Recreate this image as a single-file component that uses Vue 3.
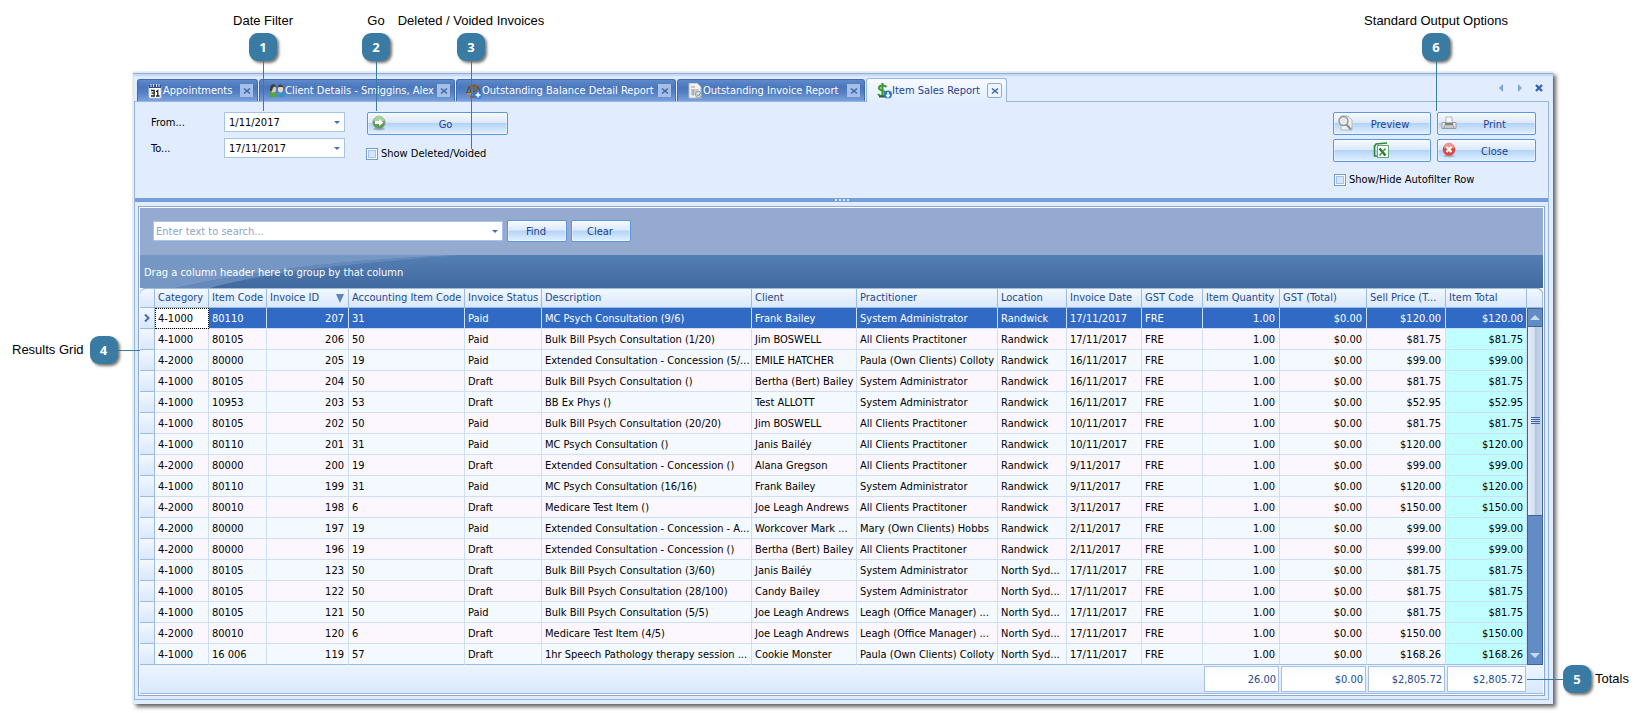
<script setup>
import { ref } from 'vue'

const tabs = [
  { id: 'appointments', title: 'Appointments' },
  { id: 'client', title: 'Client Details - Smiggins, Alex' },
  { id: 'balance', title: 'Outstanding Balance Detail Report' },
  { id: 'invoice', title: 'Outstanding Invoice Report' },
  { id: 'sales', title: 'Item Sales Report', active: true },
]

const fromDate = ref('1/11/2017')
const toDate = ref('17/11/2017')
const search = ref('')
const showVoided = ref(false)
const showAutofilter = ref(false)

const columns = [
  { key: 'category', title: 'Category' },
  { key: 'code', title: 'Item Code' },
  { key: 'invoice', title: 'Invoice ID', num: true, sorted: true },
  { key: 'account', title: 'Accounting Item Code' },
  { key: 'status', title: 'Invoice Status' },
  { key: 'description', title: 'Description' },
  { key: 'client', title: 'Client' },
  { key: 'practitioner', title: 'Practitioner' },
  { key: 'location', title: 'Location' },
  { key: 'date', title: 'Invoice Date' },
  { key: 'gstcode', title: 'GST Code' },
  { key: 'quantity', title: 'Item Quantity', num: true },
  { key: 'gst', title: 'GST (Total)', num: true },
  { key: 'price', title: 'Sell Price (T...', num: true },
  { key: 'total', title: 'Item Total', num: true },
]

const SA = 'System Administrator'
const ACP = 'All Clients Practitoner'
const rows = [
  ['4-1000', '80110', '207', '31', 'Paid', 'MC Psych Consultation (9/6)', 'Frank Bailey', SA, 'Randwick', '17/11/2017', '$120.00'],
  ['4-1000', '80105', '206', '50', 'Paid', 'Bulk Bill Psych Consultation (1/20)', 'Jim BOSWELL', ACP, 'Randwick', '17/11/2017', '$81.75'],
  ['4-2000', '80000', '205', '19', 'Paid', 'Extended Consultation - Concession (5/...', 'EMILE HATCHER', 'Paula (Own Clients) Colloty', 'Randwick', '16/11/2017', '$99.00'],
  ['4-1000', '80105', '204', '50', 'Draft', 'Bulk Bill Psych Consultation ()', 'Bertha (Bert) Bailey', SA, 'Randwick', '16/11/2017', '$81.75'],
  ['4-1000', '10953', '203', '53', 'Draft', 'BB Ex Phys ()', 'Test ALLOTT', SA, 'Randwick', '16/11/2017', '$52.95'],
  ['4-1000', '80105', '202', '50', 'Paid', 'Bulk Bill Psych Consultation (20/20)', 'Jim BOSWELL', ACP, 'Randwick', '10/11/2017', '$81.75'],
  ['4-1000', '80110', '201', '31', 'Paid', 'MC Psych Consultation ()', 'Janis Bailéy', ACP, 'Randwick', '10/11/2017', '$120.00'],
  ['4-2000', '80000', '200', '19', 'Draft', 'Extended Consultation - Concession ()', 'Alana Gregson', ACP, 'Randwick', '9/11/2017', '$99.00'],
  ['4-1000', '80110', '199', '31', 'Paid', 'MC Psych Consultation (16/16)', 'Frank Bailey', SA, 'Randwick', '9/11/2017', '$120.00'],
  ['4-2000', '80010', '198', '6', 'Draft', 'Medicare Test Item ()', 'Joe Leagh Andrews', ACP, 'Randwick', '3/11/2017', '$150.00'],
  ['4-2000', '80000', '197', '19', 'Paid', 'Extended Consultation - Concession - A...', 'Workcover Mark ...', 'Mary (Own Clients) Hobbs', 'Randwick', '2/11/2017', '$99.00'],
  ['4-2000', '80000', '196', '19', 'Draft', 'Extended Consultation - Concession ()', 'Bertha (Bert) Bailey', ACP, 'Randwick', '2/11/2017', '$99.00'],
  ['4-1000', '80105', '123', '50', 'Draft', 'Bulk Bill Psych Consultation (3/60)', 'Janis Bailéy', SA, 'North Syd...', '17/11/2017', '$81.75'],
  ['4-1000', '80105', '122', '50', 'Draft', 'Bulk Bill Psych Consultation (28/100)', 'Candy Bailey', SA, 'North Syd...', '17/11/2017', '$81.75'],
  ['4-1000', '80105', '121', '50', 'Paid', 'Bulk Bill Psych Consultation (5/5)', 'Joe Leagh Andrews', 'Leagh (Office Manager) ...', 'North Syd...', '17/11/2017', '$81.75'],
  ['4-2000', '80010', '120', '6', 'Draft', 'Medicare Test Item (4/5)', 'Joe Leagh Andrews', 'Leagh (Office Manager) ...', 'North Syd...', '17/11/2017', '$150.00'],
  ['4-1000', '16 006', '119', '57', 'Draft', '1hr Speech Pathology therapy session ...', 'Cookie Monster', 'Paula (Own Clients) Colloty', 'North Syd...', '17/11/2017', '$168.26'],
].map((r) => [...r.slice(0, 10), 'FRE', '1.00', '$0.00', r[10], r[10]])

const totals = ['26.00', '$0.00', '$2,805.72', '$2,805.72']

const callouts = [
  { n: 1, text: 'Date Filter', kind: 'top' },
  { n: 2, text: 'Go', kind: 'top' },
  { n: 3, text: 'Deleted / Voided Invoices', kind: 'top' },
  { n: 4, text: 'Results Grid', kind: 'left' },
  { n: 5, text: 'Totals', kind: 'right' },
  { n: 6, text: 'Standard Output Options', kind: 'top' },
]
</script>

<template>
  <main class="stage">
    <section class="window">
      <header class="strip">
        <div v-for="t in tabs" :key="t.id" class="tab" :class="[t.id, { active: t.active }]">
          <svg class="icon" viewBox="0 0 16 16" aria-hidden="true">
            <g v-if="t.id === 'appointments'">
              <rect x="2" y="3" width="12" height="12" rx="1" fill="#fff" stroke="#c3ccd8" />
              <rect x="2" y="2" width="12" height="3" fill="#2d4f86" />
              <path d="M4 1v3M6.500 1v3M9.500 1v3M12 1v3" stroke="#dce6f5" />
              <path d="M4 7.500h3.200v5.500H4M4.500 10.200h2.500M9 8.500l1.800-1V13M9 13h3.600" fill="none" stroke="#222" stroke-width="1.300" />
            </g>
            <g v-else-if="t.id === 'client'">
              <path d="M0 14c0-4 2-5 4-5s4 1 4 5z" fill="#58a43c" />
              <path d="M8 14c0-4 2-5 4-5s4 1 4 5z" fill="#3a8fcc" />
              <ellipse cx="4.500" cy="6" rx="2.600" ry="3.600" fill="#d9ccb4" />
              <ellipse cx="11.500" cy="6" rx="2.600" ry="3.600" fill="#e3d6c4" />
              <path d="M1 8c-1-8 6-8 6-4-3-1-3 1-4 4zM8.500 6c0-6 6-6 6 0l-1-2h-4z" fill="#3d4038" />
            </g>
            <g v-else-if="t.id === 'balance'">
              <path d="M8 1v12M2 4l6-1.500L13 4M4 14h7" fill="none" stroke="#8a5a1e" stroke-width="1.600" />
              <path d="M3 4L.5 10h5zM12 4L9.500 9h5z" fill="none" stroke="#6f4512" />
              <path d="M.5 10h5c-1 3-4 3-5 0z" fill="#c58f36" />
              <circle cx="12" cy="12" r="4" fill="#2f7fdc" />
              <path d="M12 9.500v5M9.500 12h5" stroke="#fff" stroke-width="1.600" />
            </g>
            <g v-else-if="t.id === 'invoice'">
              <path d="M2 0h8l4 4v11H2z" fill="#f3f3f0" stroke="#b5b8bc" />
              <path d="M4 4h4M4 7h8M4 9h8M4 11h5M6 6v7" stroke="#9a9da2" />
              <circle cx="11.500" cy="11.500" r="3" fill="#d5e8ef" stroke="#8c979c" />
              <path d="M10 11.500l1.500 1.500 2-3" fill="none" stroke="#3a9a8a" />
            </g>
            <g v-else>
              <path d="M10.500 4C8.500 1.800 3 2 3 5s7 2.500 7 5.500-6 3.500-8 .5M6.500 0v14" fill="none" stroke="#3f9a35" stroke-width="2.200" />
              <path d="M3 13.500h7" stroke="#375c36" stroke-width="2" />
              <circle cx="12" cy="11.500" r="4" fill="#2c78cf" />
              <path d="M12 9v4.500M10.300 11.800L12 14l1.700-2.200" fill="none" stroke="#fff" stroke-width="1.500" />
            </g>
          </svg>
          <span>{{ t.title }}</span>
          <button class="tab-close" :aria-label="'Close ' + t.title">
            <svg viewBox="0 0 8 8" aria-hidden="true"><path d="M1 1.500l6 5M7 1.500l-6 5" stroke="currentColor" stroke-width="1.600" /></svg>
          </button>
        </div>
        <nav class="strip-nav">
          <button aria-label="Previous tab"><svg viewBox="0 0 8 8"><path d="M6 0v8L2 4z" fill="#7fa3d2" /></svg></button>
          <button aria-label="Next tab"><svg viewBox="0 0 8 8"><path d="M2 0v8l4-4z" fill="#7fa3d2" /></svg></button>
          <button aria-label="Close report"><svg viewBox="0 0 8 8"><path d="M1 1l6 6M7 1L1 7" stroke="#2d66b8" stroke-width="2.400" /></svg></button>
        </nav>
      </header>

      <div class="page">
        <div class="toolbar">
          <div class="dates">
            <label for="from">From...</label>
            <div class="combo">
              <input id="from" v-model="fromDate" type="text" />
              <button aria-label="Choose from date"></button>
            </div>
            <label for="to">To...</label>
            <div class="combo">
              <input id="to" v-model="toDate" type="text" />
              <button aria-label="Choose to date"></button>
            </div>
          </div>
          <div class="run">
            <button class="btn">
              <svg class="icon" viewBox="0 0 16 16" aria-hidden="true">
                <ellipse cx="8" cy="14" rx="6" ry="1.500" fill="#9fb1c4" />
                <circle cx="8" cy="7.500" r="6" fill="#5f9c55" stroke="#7d9480" />
                <path d="M2.500 6a5.500 5.500 0 0 1 11 0z" fill="#a9cfa0" />
                <path d="M4 6h4V4l4.500 3.500L8 11V9H4z" fill="#fff" />
              </svg>
              <span>Go</span>
            </button>
            <label class="check"><input v-model="showVoided" type="checkbox" />Show Deleted/Voided</label>
          </div>
          <div class="output">
            <button class="btn">
              <svg class="icon" viewBox="0 0 16 16" aria-hidden="true">
                <path d="M4 1h7l4 4v10H4z" fill="#f0f1f1" stroke="#b3b6ba" />
                <circle cx="6.500" cy="6" r="4.500" fill="#e4e8ea" stroke="#94989c" stroke-width="1.500" />
                <path d="M9.500 9.500l4.500 5" stroke="#8b8f93" stroke-width="2.200" />
              </svg>
              <span>Preview</span>
            </button>
            <button class="btn">
              <svg class="icon" viewBox="0 0 16 16" aria-hidden="true">
                <path d="M1 7.500h14v6H1z" fill="#eceded" stroke="#9a9ea2" />
                <path d="M3.500 10L5 5.500h6l1.500 4.500z" fill="#7b8085" />
                <path d="M5 7.500V2h6v5.500z" fill="#f7f8f8" stroke="#b3b6ba" />
                <path d="M3 11h10v2H3z" fill="#fff" stroke="#8d9195" />
              </svg>
              <span>Print</span>
            </button>
            <button class="btn excel" aria-label="Export to Excel">
              <svg class="icon" viewBox="0 0 16 16" aria-hidden="true">
                <path d="M1 5l2-3 11-1" fill="none" stroke="#2f8a3a" stroke-width="1.600" />
                <path d="M1.500 4v10h3" fill="none" stroke="#2f8a3a" stroke-width="1.600" />
                <rect x="4.500" y="3.500" width="11" height="12" fill="#fff" stroke="#6aa574" />
                <path d="M6.500 6.500l6 7" stroke="#1f7a2e" stroke-width="2.400" />
                <path d="M12.500 6.500l-6 7" stroke="#3c9a49" stroke-width="1.600" />
              </svg>
            </button>
            <button class="btn">
              <svg class="icon" viewBox="0 0 16 16" aria-hidden="true">
                <ellipse cx="8" cy="14" rx="6" ry="1.500" fill="#a9b8cc" />
                <circle cx="8" cy="7.500" r="6.300" fill="#d84a43" />
                <path d="M2.500 6a5.500 5.500 0 0 1 11 0z" fill="#ea9a93" />
                <path d="M5.500 5l5 5M10.500 5l-5 5" stroke="#fff" stroke-width="2.200" />
              </svg>
              <span>Close</span>
            </button>
            <label class="check wide"><input v-model="showAutofilter" type="checkbox" />Show/Hide Autofilter Row</label>
          </div>
        </div>

        <div class="splitter"><i></i><i></i><i></i><i></i></div>

        <div class="grid">
          <form class="find" @submit.prevent>
            <div class="combo search">
              <input v-model="search" type="text" placeholder="Enter text to search..." aria-label="Search" />
              <button type="button" aria-label="Recent searches"></button>
            </div>
            <button class="btn small">Find</button>
            <button class="btn small" type="button">Clear</button>
          </form>
          <div class="group">
            <svg viewBox="0 0 400 33" preserveAspectRatio="none" aria-hidden="true">
              <path d="M0 0H320C220 4 120 14 36 33H0z" fill="#7597c3" />
              <path d="M320 0C220 4 120 14 36 33H70C130 16 220 8 320 0z" fill="#6489ba" />
            </svg>
            <span>Drag a column header here to group by that column</span>
          </div>
          <table>
            <colgroup>
              <col class="gutter" />
              <col v-for="c in columns" :key="c.key" :class="c.key" />
              <col class="bar" />
            </colgroup>
            <thead>
              <tr>
                <th></th>
                <th v-for="c in columns" :key="c.key">
                  {{ c.title }}<svg v-if="c.sorted" class="sort" viewBox="0 0 8 9"><path d="M0 0h8L4 9z" fill="#5f86bb" /></svg>
                </th>
                <th></th>
              </tr>
            </thead>
            <tbody>
              <tr v-for="(r, i) in rows" :key="r[2]" :class="{ selected: i === 0 }">
                <th scope="row">
                  <svg v-if="i === 0" viewBox="0 0 6 8"><path d="M1 0.500L4.500 4L1 7.500" fill="none" stroke="#3f6cae" stroke-width="2" /></svg>
                </th>
                <td v-for="(v, j) in r" :key="j" :class="{ num: columns[j].num, focus: i === 0 && j === 0, total: j === 14 }">{{ v }}</td>
                <td v-if="i === 0" class="scroll" :rowspan="rows.length">
                  <div class="rail">
                    <button aria-label="Scroll up"><svg viewBox="0 0 10 5"><path d="M0 5l5-5 5 5z" fill="#c9daf0" /></svg></button>
                    <div class="track"><div class="thumb"><i></i><i></i><i></i><i></i></div></div>
                    <button aria-label="Scroll down"><svg viewBox="0 0 10 5"><path d="M0 0l5 5 5-5z" fill="#c9daf0" /></svg></button>
                  </div>
                </td>
              </tr>
            </tbody>
            <tfoot>
              <tr>
                <td colspan="12"></td>
                <td v-for="(v, i) in totals" :key="i"><output>{{ v }}</output></td>
                <td></td>
              </tr>
            </tfoot>
          </table>
        </div>
      </div>
    </section>

    <div v-for="c in callouts" :key="c.n" class="callout" :class="[c.kind, 'c' + c.n]">
      <span class="text">{{ c.text }}</span>
      <b>{{ c.n }}</b>
      <i class="line"></i>
    </div>
  </main>
</template>

<style>
body {
  background: #fff;
}
</style>

<style scoped>
.stage {
  position: relative;
  padding: 72px 93px 9px 133px;
  font: 11px/14px "DejaVu Sans Condensed", "DejaVu Sans", sans-serif;
  color: #000;
}
.stage *,
.stage *::before {
  box-sizing: border-box;
}
button,
input {
  font: inherit;
  color: inherit;
  margin: 0;
  padding: 0;
}
button {
  border: 0;
  background: none;
}
.icon {
  width: 16px;
  height: 16px;
  flex: none;
}

.window {
  background: #e1edff;
  border-top: 1px solid #dce8f6;
  padding: 0 4px 4px 1px;
  box-shadow: 3px 3px 4px rgba(0, 0, 0, 0.6), 0 0 1px #a9bfdd;
}
.strip {
  display: flex;
  align-items: flex-end;
  height: 29px;
  margin: 0 -4px -1px -1px;
  padding-left: 4px;
  border-top: 1px solid #8fb1d8;
  box-shadow: inset 0 2px 2px #c3d7f0;
}
.tab {
  position: relative;
  display: flex;
  align-items: center;
  height: 22px;
  margin-right: 1px;
  margin-bottom: 1px;
  padding: 0 4px 0 9px;
  border: 1px solid #3f6db5;
  border-bottom: 0;
  border-radius: 3px 3px 0 0;
  color: #fff;
  background: linear-gradient(#5f8aca, #4a76bc 35%, #5580c4 60%, #7ba1db);
  white-space: nowrap;
}
.tab.appointments { width: 121px; }
.tab.client { width: 196px; }
.tab.balance { width: 220px; }
.tab.invoice { width: 188px; }
.tab.active {
  width: 141px;
  height: 24px;
  margin-bottom: 0;
  border-color: #94b7e6;
  color: #1e4590;
  background: linear-gradient(#f7faff, #e1edff);
}
.tab-close {
  display: flex;
  align-items: center;
  justify-content: center;
  width: 13px;
  height: 13px;
  margin-left: auto;
  background: #a5bfe6;
  color: #3c69ae;
}
.tab-close svg {
  width: 8px;
  height: 8px;
}
.active .tab-close {
  width: 15px;
  height: 15px;
  border: 1px solid #86abdc;
  border-radius: 2px;
  background: #eef5ff;
}
.strip-nav {
  display: flex;
  gap: 11px;
  margin-left: auto;
  padding: 0 10px 10px 0;
}
.strip-nav svg {
  display: block;
  width: 8px;
  height: 8px;
}

.page {
  border: 1px solid #94b7e6;
}
.toolbar {
  display: flex;
  height: 96px;
  padding: 10px 12px 0 16px;
}
.dates {
  display: grid;
  grid-template-columns: 73px 121px;
  grid-auto-rows: 20px;
  row-gap: 6px;
  align-items: center;
}
.dates label {
  padding-top: 2px;
}
.combo {
  display: flex;
  align-items: center;
  height: 20px;
  border: 1px solid #a6c3ea;
  background: #fff;
}
.combo input {
  flex: 1;
  min-width: 0;
  padding: 2px 0 0 4px;
  border: 0;
  outline: 0;
  background: none;
}
.search input {
  padding-left: 2px;
}
.combo input::placeholder {
  color: #8aa6cb;
  opacity: 1;
}
.combo button {
  width: 14px;
  height: 100%;
  display: flex;
  align-items: center;
  justify-content: center;
}
.combo button::before {
  content: "";
  border: 3px solid transparent;
  border-top-color: #3d70b5;
  border-bottom: 0;
}
.run {
  display: flex;
  flex-direction: column;
  gap: 11px;
  width: 141px;
  margin-left: 22px;
}
.btn {
  display: flex;
  align-items: center;
  height: 23px;
  border: 1px solid #5c97de;
  border-radius: 2px;
  padding: 0 3px;
  color: #1c3f94;
  background: linear-gradient(#f7faff, #dbe9fb 46%, #b3d3f6 50%, #cfe6fd 80%, #dff0ff);
  box-shadow: inset 0 0 0 1px rgba(255, 255, 255, 0.35);
}
.btn .icon {
  margin-bottom: 2px;
}
.btn span {
  flex: 1;
  padding-top: 2px;
  text-align: center;
}
.btn.excel {
  justify-content: center;
  padding: 0 2px 0 0;
}
.btn.small {
  justify-content: center;
  width: 60px;
  height: 22px;
  padding: 2px 2px 0 0;
}
.check {
  display: flex;
  align-items: center;
  gap: 3px;
  height: 14px;
  margin-left: -1px;
  padding-top: 1px;
  white-space: nowrap;
}
.check input {
  appearance: none;
  width: 12px;
  height: 12px;
  border: 1px solid #6f9cd8;
  background: #d5e5fb;
  box-shadow: inset 0 0 0 1px #fff, inset 0 0 0 2px #a5c3ec;
}
.output {
  display: grid;
  grid-template-columns: 98px 99px;
  grid-auto-rows: 23px;
  gap: 4px 6px;
  margin-left: auto;
}
.check.wide {
  grid-column: span 2;
  margin: 6px 0 0 1px;
}
.splitter {
  display: flex;
  justify-content: center;
  align-items: center;
  gap: 2px;
  height: 4px;
  background: #759fdb;
}
.splitter i {
  width: 2px;
  height: 2px;
  background: #e1edff;
}

.grid {
  margin: 4px 3px 3px;
  padding: 1px;
  border: 1px solid #8ba9d8;
  background: #fff;
}
.find {
  display: flex;
  align-items: center;
  gap: 4px;
  height: 47px;
  padding-left: 13px;
  padding-bottom: 1px;
  background: #94aace;
}
.search {
  width: 350px;
}
.group {
  position: relative;
  display: flex;
  align-items: center;
  height: 33px;
  padding: 2px 4px 0;
  color: #fff;
  background: linear-gradient(#547fb5, #41699f);
}
.group svg {
  position: absolute;
  left: 0;
  top: 0;
  width: 400px;
  height: 33px;
}
.group span {
  position: relative;
}

table {
  width: 100%;
  table-layout: fixed;
  border-collapse: separate;
  border-spacing: 0;
}
col.gutter { width: 15px; }
col.category { width: 54px; }
col.code { width: 58px; }
col.invoice { width: 82px; }
col.account { width: 116px; }
col.status { width: 77px; }
col.client { width: 105px; }
col.practitioner { width: 141px; }
col.location { width: 69px; }
col.date { width: 75px; }
col.gstcode { width: 61px; }
col.quantity { width: 77px; }
col.gst { width: 87px; }
col.price { width: 79px; }
col.total { width: 81px; }
col.bar { width: 16px; }
th,
td {
  height: 21px;
  padding: 2px 0 0 3px;
  text-align: left;
  font-weight: normal;
  white-space: nowrap;
  overflow: hidden;
  border-right: 1px solid #cddff2;
  border-bottom: 1px solid #cddff2;
}
th {
  border-color: #9dbae0;
  background: linear-gradient(#f2f8ff, #d9e8fb);
}
thead th {
  height: 20px;
  border-top: 1px solid #9dbae0;
  padding-top: 0;
  color: #1e4a8c;
}
thead th:first-child { border-top-left-radius: 6px; }
thead th:last-child { border-top-right-radius: 6px; }
thead tr { background: #41699f; }
.sort {
  float: right;
  width: 8px;
  height: 9px;
  margin: 3px 4px 0 0;
}
tbody th {
  padding-top: 0;
}
tbody th svg {
  display: block;
  width: 6px;
  height: 8px;
  margin-left: 1px;
}
tbody tr:nth-child(even) { background: #fcf7ff; }
tbody tr:nth-child(odd) { background: #f3f9ff; }
tbody tr.selected {
  background: #316ac5;
  color: #fff;
}
tbody tr:last-child td,
tbody tr:last-child th {
  border-bottom-color: #9dbae0;
}
td.num {
  text-align: right;
  padding: 2px 4px 0 0;
}
td.focus {
  background: #fff;
  color: #000;
  outline: 1px dotted #000;
  outline-offset: -1px;
}
td.total {
  padding-right: 3px;
  background: #c0ffff;
}
.selected td.total {
  background: none;
}
td.scroll {
  position: relative;
  padding: 0;
  border: 0;
}
.rail {
  position: absolute;
  inset: 0;
  display: flex;
  flex-direction: column;
  border: 1px solid #3a639f;
  background: #628cc5;
}
.rail button {
  display: flex;
  align-items: center;
  justify-content: center;
  height: 17px;
}
.rail button svg {
  width: 10px;
  height: 5px;
}
.track {
  flex: 1;
  border-top: 1px solid #3a639f;
}
.thumb {
  display: flex;
  flex-direction: column;
  align-items: center;
  justify-content: center;
  gap: 1px;
  height: 59%;
  border-bottom: 1px solid #3a639f;
  background: linear-gradient(90deg, #e6eef9, #d0dff0 48%, #b3c7df 50%, #c9d8ea);
}
.thumb i {
  width: 9px;
  height: 1px;
  background: #3a639f;
}
tfoot td {
  height: 29px;
  padding: 1px;
  border-right: 0;
  border-bottom: 1px solid #9dbae0;
  background: linear-gradient(#edf4ff, #d8e8fb);
}
tfoot output {
  display: flex;
  align-items: center;
  justify-content: flex-end;
  height: 26px;
  padding: 2px 2px 0 0;
  border: 1px solid #a6c0e4;
  color: #1e4a92;
  background: linear-gradient(#f7faff, #fff 40%);
}

.callout {
  position: absolute;
  display: flex;
  align-items: center;
  font: 13px/16px "Liberation Sans", Arial, sans-serif;
  white-space: nowrap;
}
.callout b {
  display: flex;
  align-items: center;
  justify-content: center;
  width: 28px;
  height: 28px;
  border-radius: 9px;
  color: #fff;
  background: #397ba3;
  box-shadow: 2px 2px 3px rgba(0, 0, 0, 0.55);
  font: bold 13px/16px "Noto Sans", sans-serif;
}
.callout .line {
  background: #397ba3;
}
.top {
  top: 13px;
  flex-direction: column;
  width: 150px;
}
.top b {
  margin-top: 4px;
}
.top .line {
  width: 1px;
  height: 50px;
}
.c1 { left: 188px; }
.c2 { left: 301px; }
.c3 { left: 396px; }
.c6 { right: 135px; }
.c3 .line { height: 88px; }
.left {
  top: 336px;
  left: 12px;
  gap: 6px;
}
.left .line {
  width: 22px;
  height: 1px;
  margin-left: -6px;
}
.right {
  bottom: 20px;
  right: 17px;
  flex-direction: row-reverse;
  gap: 4px;
}
.right .line {
  width: 36px;
  height: 1px;
  margin-right: -4px;
}
</style>
